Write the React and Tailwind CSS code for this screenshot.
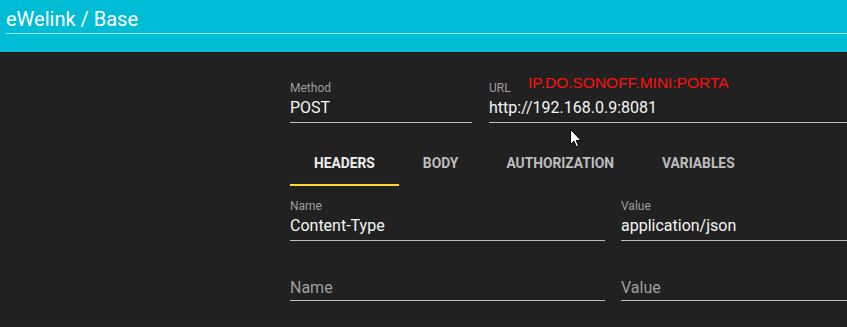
import React, { useState } from 'react'

const font = { fontFamily: 'Roboto, "Noto Sans", sans-serif' }

function Field({ label, value, placeholder, className = '' }) {
  return (
    <div className={`flex flex-col ${className}`}>
      <span className="h-[14px] text-[12px] leading-[14px] text-[#9e9e9e]">{label}</span>
      <div
        className={`h-[28px] border-b border-[#bdbdbd] text-[16px] leading-[24px] text-[#f5f5f5] ${
          value ? 'pt-[1px]' : 'pt-[3px]'
        }`}
      >
        {value || <span className="text-[#9e9e9e]">{placeholder}</span>}
      </div>
    </div>
  )
}

function Cursor() {
  return (
    <svg width="12" height="19" viewBox="0 0 12 19" className="absolute left-[570px] top-[129px]">
      <path d="M0.5 0.5 L0.5 15.5 L4 12.2 L6.4 17.8 L8.5 16.9 L6.2 11.4 L11 11.4 Z" fill="#ffffff" stroke="#000000" strokeWidth="1" />
    </svg>
  )
}

export default function App() {
  const [tab, setTab] = useState('HEADERS')
  const tabs = ['HEADERS', 'BODY', 'AUTHORIZATION', 'VARIABLES']

  return (
    <div className="relative h-[327px] w-[847px] overflow-hidden bg-[#212121]" style={font}>
      <div className="h-[52px] bg-[#00bcd4] pl-[6px]">
        <div className="h-[34px] border-b border-[#9ee3ec] pt-[6px] text-[20px] leading-[26px] text-white">
          eWelink / Base
        </div>
      </div>
      <div className="h-px bg-[#141414]" />

      <div className="ml-[290px] pt-[28px]">
        <div className="flex gap-[17px]">
          <Field label="Method" value="POST" className="w-[182px]" />
          <div className="relative flex-1">
            <Field label="URL" value="http://192.168.0.9:8081" />
            <span
              className="absolute left-[39px] top-[-8px] text-[15.5px] leading-[20px] text-[#ff0f0f]"
              style={{ fontFamily: '"Liberation Sans", Arial, sans-serif' }}
            >
              IP.DO.SONOFF.MINI:PORTA
            </span>
          </div>
        </div>

        <div className="mt-[19px] flex">
          {tabs.map(t => (
            <button
              key={t}
              onClick={() => setTab(t)}
              className={`h-[44px] border-b-2 px-6 text-[13.8px] font-bold leading-[16px] ${
                tab === t ? 'border-[#fdd835] text-[#eeeeee]' : 'border-transparent text-[#bdbdbd]'
              }`}
            >
              {t}
            </button>
          ))}
        </div>

        <div className="mt-[13px] flex gap-[16px]">
          <Field label="Name" value="Content-Type" className="w-[315px]" />
          <Field label="Value" value="application/json" className="flex-1" />
        </div>

        <div className="mt-[18px] flex gap-[16px]">
          <Field label="" placeholder="Name" className="w-[315px]" />
          <Field label="" placeholder="Value" className="flex-1" />
        </div>
      </div>

      <Cursor />
    </div>
  )
}
